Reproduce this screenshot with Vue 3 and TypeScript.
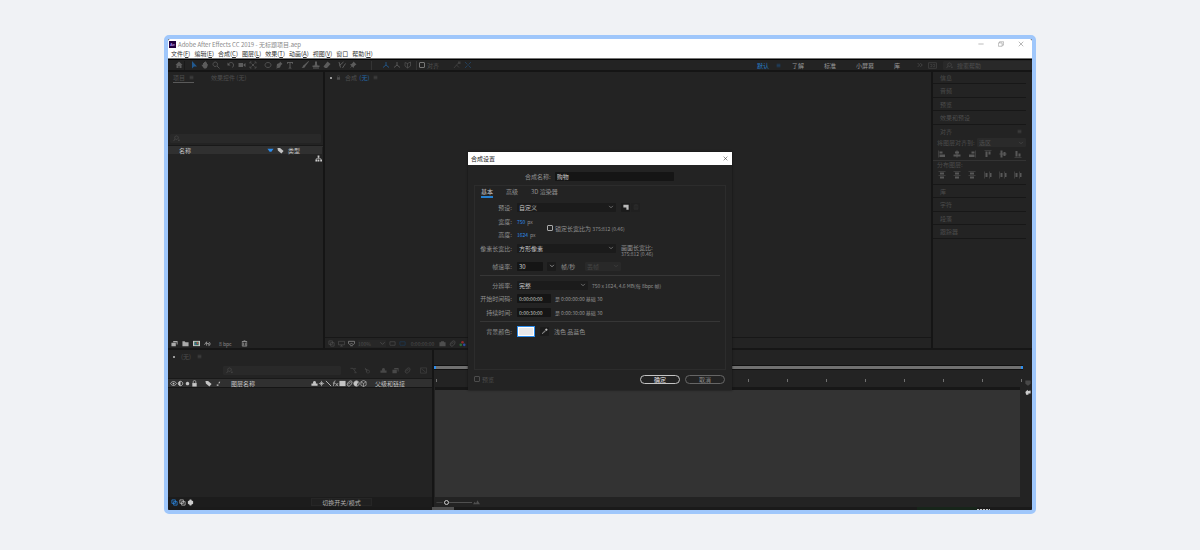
<script setup lang="ts">
import { h, ref } from 'vue'

type Shape = { f?: string; s?: string; w?: number }

const shapes: Record<string, Shape> = {
  home: { f: 'M8 1 1 8h2v6h4v-4h2v4h4V8h2z' },
  arrow: { f: 'M4 0v15l4-4h6z' },
  hand: { f: 'M4 8V4h2V2h2v-1h2v2h2v3l2 1-2 6-2 2H6L1 8l1-1z' },
  zoom: { s: 'M6.5 2a4.500 4.500 0 1 0 .01 0zM10 10l5 5', w: 1.6 },
  search: { s: 'M8 2a4 4 0 1 0 .01 0zM5 9l-4 5', w: 1.6, f: 'M11 11h5l-2.500 3z' },
  rotate: { s: 'M3 7C5 1 13 2 13 8c0 3-1 4-3 5', w: 1.7, f: 'M1 3v6h6z' },
  camera: { f: 'M1 4h9v8H1zM11 7l4-3v8l-4-3z' },
  anchor: { s: 'M2 5V2h3M11 2h3v3M14 11v3h-3M5 14H2v-3M5 5l6 6M11 5l-6 6', w: 1.5 },
  ellipse: { s: 'M8 3c8 0 8 10 0 10S0 3 8 3z', w: 1.5 },
  pen: { f: 'M10 1l5 5-3 2-2 5-8 2 5-6-4 4 1-7 5-2z' },
  type: { f: 'M2 2h12v4h-1l-1-2H9v9l2 1v1H5v-1l2-1V4H4L3 6H2z' },
  brush: { f: 'M15 0l1 1-7 9-3-2zM6 8l3 2c-1 4-5 4-8 4 3-1 2-5 5-6z' },
  stamp: { f: 'M6 1h4v5l1 3h4v3H1V9h4l1-3zM2 13h12v2H2z' },
  eraser: { f: 'M9 1l6 5-7 8H4L1 11z' },
  roto: { s: 'M2 2l3 11M3 9l8-7M9 14l6-9', w: 2 },
  pin: { f: 'M9 1l6 6-2 1-3 3-1 3-3-3-5 4 4-5-3-3 3-1 3-3z' },
  axis: { s: 'M8 2v6L2 13M8 8l6 5', w: 1.8 },
  box: { s: 'M2 3l5 2 6-3v8l-6 4-5-4z M7 5v9', w: 1.2 },
  snap: { s: 'M2 14l5-6 5 5M7 8l4-4', w: 1.8, f: 'M10 1h5v5h-5z' },
  cross: { s: 'M2 2l5 5M14 2L9 7M2 14l5-5M14 14L9 9', w: 2 },
  menu: { s: 'M2 4h12M2 8h12M2 12h12', w: 1.8 },
  chevrons: { s: 'M2 3l5 5-5 5M9 3l5 5-5 5', w: 1.5 },
  keyboard: { s: 'M1 3h14v10H1zM4 6h3v4H4M9 6h3v4H9', w: 1.3 },
  chev: { s: 'M3 5l5 5 5-5', w: 1.8 },
  down: { f: 'M1 4h14l-5 7H6z' },
  tag: { f: 'M1 2h6l8 7-5 6-8-7z' },
  flow: { f: 'M6 1h4v5H6zM1 10h4v5H1zM6 10h4v5H6zM12 10h4v5h-4z', s: 'M8 5v3M3 11V8h10v3', w: 1.2 },
  footage: { f: 'M5 2h10v8h-2V5H5zM1 6h10v8H1z' },
  folder: { f: 'M1 3h5l2 2h7v9H1z' },
  speed: { s: 'M1 11L6 4v9M6 8h5v5M11 5c4 0 4 7 0 8', w: 1.7 },
  trash: { f: 'M6 1h4v1h4v2H2V2h4z', s: 'M3 5v9h10V5M6 6v7M10 6v7', w: 1.5 },
  copy: { s: 'M2 2h8v8H2zM6 6h8v8H6z', w: 1.6 },
  screen: { s: 'M1 3h14v8H1zM5 14h6M8 11v3', w: 1.5 },
  mask: { s: 'M1 3h14v5c-3 5-6-1-7 0-2 1-6 4-7-1zM5 13h6', w: 2 },
  lock: { f: 'M3 7h10v8H3z', s: 'M5 8V4c0-4 6-4 6 0v4', w: 1.6 },
  region: { s: 'M2 11V4h12v8H5M2 12h3', w: 1.6 },
  photo: { f: 'M5 3h6l1 2h3v9H1V5h3z' },
  eye: { s: 'M1 8c4-6 10-6 14 0-4 6-10 6-14 0z', w: 1.8, f: 'M8 6a2 2 0 1 0 .01 0z' },
  sound: { f: 'M8 3a5 5 0 0 0 0 10z', s: 'M8 3a5 5 0 1 0 .01 0z', w: 2 },
  dot: { f: 'M8 4a4 4 0 1 0 .01 0z' },
  hash: { f: 'M9 4h3l-2 4H8zM4 10h4v3H4z' },
  shy: { f: 'M8 2c3 0 4 3 3 6h4v5H1V8h4C4 5 5 2 8 2z' },
  sun: { s: 'M8 2v12M2 8h12M5 5l6 6M11 5l-6 6', w: 1.5 },
  globe: { f: 'M6 1h4v2l4 2v6l-4 2v2H6v-2l-4-2V5l4-2z' },
  slash: { s: 'M2 2l12 12', w: 2 },
  fx: { s: 'M8 2C4 1 5 8 3 14M2 7h5M8 7l6 7M14 7l-6 7', w: 1.7 },
  frame: { f: 'M1 2h14v12H1z' },
  blur: { s: 'M4 13C-1 9 10-1 13 3s-5 14-9 10zM5 10l5-5', w: 1.9 },
  half: { s: 'M8 2a6 6 0 1 0 .01 0z', w: 2, f: 'M8 2a6 6 0 0 0 0 12L12 4z' },
  cube: { s: 'M8 1l6 3v8l-6 3-6-3V4zM2 4l6 4 6-4M8 8v7', w: 1.4 },
  graph: { s: 'M1 2h14v12H1zM3 4l10 8', w: 1.3 },
  flowline: { s: 'M1 3h6l6 9M8 4h6M10 13h5', w: 1.7 },
  draft: { s: 'M2 2l4 4v5M9 7a3.500 3.500 0 1 0 .01 0zM2 6h6', w: 1.6 },
  al: { f: 'M1 1h1v14H1zM3 3h6v4H3zM3 9h11v5H3z' },
  ac: { f: 'M7 1h2v14H7zM4 3h8v4H4zM1 9h14v4H1z' },
  ar: { f: 'M14 1h1v14h-1zM7 3h6v4H7zM2 9h11v5H2z' },
  at: { f: 'M1 1h14v1H1zM3 3h4v11H3zM9 3h4v6H9z' },
  am: { f: 'M1 7h14v2H1zM3 1h4v14H3zM9 4h4v8H9z' },
  ab: { f: 'M1 14h14v1H1zM3 2h4v11H3zM9 7h4v6H9z' },
  dv: { f: 'M1 1h14v1H1zM4 3h8v4H4zM1 9h14v1H1zM4 11h8v4H4z' },
  dh: { f: 'M1 1h1v14H1zM3 4h4v8H3zM10 1h1v14h-1zM12 4h3v8h-3z' },
  minimise: { s: 'M1 8h14', w: 1.5 },
  restore: { s: 'M1 5h10v9H1zM4 5V2h11v9h-4', w: 1.4 },
  close: { s: 'M2 2l12 12M14 2L2 14', w: 1.6 },
  save: { f: 'M1 2h14v13H9V9H1z' },
  dropper: { f: 'M10 2l2-1 3 3-1 2-2 2-4-4z', s: 'M9 6l-7 7-1 2 2-1 7-7', w: 1.6 },
  mountains: { f: 'M0 12l4-6 3 4 3-7 6 9z' },
  shield: { f: 'M1 1h14v9l-7 5-7-5z' },
  comet: { f: 'M1 8l6-6 1 3 7-1v8H9v3H3z' },
}

const Icon = (props: { n: string }) => {
  const g = shapes[props.n]
  return h('svg', { class: 'ic', viewBox: '0 0 16 16', 'aria-hidden': 'true' }, [
    g.f ? h('path', { d: g.f, fill: 'currentColor' }) : null,
    g.s ? h('path', { d: g.s, fill: 'none', stroke: 'currentColor', 'stroke-width': g.w }) : null,
  ])
}
Icon.props = ['n']

const menus = [['文件', 'F'], ['编辑', 'E'], ['合成', 'C'], ['图层', 'L'], ['效果', 'T'], ['动画', 'A'], ['视图', 'V'], ['窗口', ''], ['帮助', 'H']]
const tools = [
  ['arrow', 'hand', 'zoom'],
  ['rotate', 'camera', 'anchor'],
  ['ellipse', 'pen', 'type'],
  ['brush', 'stamp', 'eraser'],
  ['roto', 'pin'],
]
const workspaces = ['了解', '标准', '小屏幕', '库']
const upper = ['信息', '音频', '预览', '效果和预设']
const lower = ['库', '字符', '段落', '跟踪器']
const alignIcons = ['al', 'ac', 'ar', 'at', 'am', 'ab']
const spreadIcons = ['dv', 'dv', 'dv', 'dh', 'dh', 'dh']
const switches = ['shy', 'sun', 'slash', 'fx', 'frame', 'blur', 'half', 'cube']

const compName = ref('购物')
const fps = ref('30')
const start = ref('0:00:00:00')
const duration = ref('0:00:30:00')
</script>

<template>
  <main class="page">
    <section class="window">
      <header class="titlebar">
        <span class="logo">Ae</span>
        <h1>Adobe After Effects CC 2019 - 无标题项目.aep</h1>
        <div class="winbtns">
          <button aria-label="最小化"><Icon n="minimise" /></button>
          <button aria-label="还原"><Icon n="restore" /></button>
          <button aria-label="关闭"><Icon n="close" /></button>
        </div>
      </header>
      <nav class="menubar">
        <button v-for="m in menus" :key="m[0]">{{ m[0] }}<template v-if="m[1]">(<u>{{ m[1] }}</u>)</template></button>
      </nav>

      <div class="toolbar">
        <button class="tool home" aria-label="主页"><Icon n="home" /></button>
        <div v-for="(g, i) in tools" :key="i" class="group">
          <button v-for="t in g" :key="t" class="tool" :class="{ active: t === 'arrow' }" :aria-label="t"><Icon :n="t" /></button>
        </div>
        <div class="group axes">
          <button class="tool active" aria-label="本地轴"><Icon n="axis" /></button>
          <button class="tool" aria-label="世界轴"><Icon n="axis" /></button>
          <button class="tool" aria-label="视图轴"><Icon n="box" /></button>
        </div>
        <label class="check snapcheck"><input type="checkbox" />对齐</label>
        <div class="group faint">
          <button class="tool" aria-label="吸附"><Icon n="snap" /></button>
          <button class="tool active" aria-label="扩展"><Icon n="cross" /></button>
        </div>
        <nav class="spaces">
          <button class="current">默认<Icon n="menu" /></button>
          <button v-for="w in workspaces" :key="w">{{ w }}</button>
          <button class="more" aria-label="更多"><Icon n="chevrons" /></button>
        </nav>
        <Icon n="keyboard" class="keys" />
        <label class="find help"><Icon n="search" /><input type="search" placeholder="搜索帮助" aria-label="搜索帮助" /></label>
      </div>

      <div class="upper">
        <section class="project">
          <div class="tabs">
            <button class="on">项目<Icon n="menu" /></button>
            <button>效果控件 (无)</button>
          </div>
          <div class="preview"></div>
          <label class="find"><Icon n="search" /><input type="search" aria-label="搜索项目" /></label>
          <div class="cols">
            <span class="name">名称</span><Icon n="down" class="blue" /><Icon n="tag" /><span class="kind">类型</span>
          </div>
          <div class="list"><Icon n="flow" /></div>
          <footer class="projfoot">
            <Icon n="footage" /><Icon n="folder" />
            <svg class="ic" viewBox="0 0 16 16" aria-hidden="true">
              <rect x="0" y="2" width="16" height="12" fill="#c8c8c8" />
              <rect x="3" y="4" width="10" height="8" fill="#2f6f52" /><circle cx="10" cy="7" r="2" fill="#c44" /><circle cx="6" cy="9" r="2" fill="#46a" />
            </svg>
            <Icon n="speed" /><span>8 bpc</span><Icon n="trash" />
          </footer>
        </section>

        <section class="viewer">
          <div class="tabs">
            <i class="square"></i><Icon n="lock" /><span>合成 <b>(无)</b></span><Icon n="menu" />
          </div>
          <div class="stage"></div>
          <footer class="viewfoot">
            <Icon n="copy" /><Icon n="screen" /><Icon n="mask" class="lit" />
            <button class="scale">100%<Icon n="chev" /></button>
            <Icon n="region" /><Icon n="region" class="deep" />
            <span class="time">0:00:00:00</span>
            <Icon n="photo" /><Icon n="blur" />
            <svg class="ic" viewBox="0 0 16 16" aria-hidden="true">
              <circle cx="8" cy="5" r="3" fill="#8d2b2b" /><circle cx="4" cy="11" r="3" fill="#2b6e36" /><circle cx="12" cy="11" r="3" fill="#2c4ea0" />
            </svg>
          </footer>
        </section>

        <aside class="side">
          <button v-for="u in upper" :key="u" class="item">{{ u }}</button>
          <section class="align">
            <h2>对齐<Icon n="menu" /></h2>
            <div class="alignto">
              <label for="align-to">将图层对齐到:</label>
              <span class="sel"><select id="align-to"><option>选区</option></select><Icon n="chev" /></span>
            </div>
            <div class="six"><button v-for="a in alignIcons" :key="a" :aria-label="a"><Icon :n="a" /></button></div>
            <h3>分布图层:</h3>
            <div class="six"><button v-for="(a, i) in spreadIcons" :key="i" :aria-label="a + i"><Icon :n="a" /></button></div>
          </section>
          <button v-for="l in lower" :key="l" class="item">{{ l }}</button>
        </aside>
      </div>

      <div class="timeline">
        <section class="layers">
          <div class="tabs"><i class="square"></i><span>(无)</span><Icon n="menu" /></div>
          <div class="layertools">
            <label class="find"><Icon n="search" /><input type="search" aria-label="搜索图层" /></label>
            <Icon n="flowline" /><Icon n="draft" /><Icon n="shy" /><Icon n="footage" /><Icon n="blur" /><Icon n="graph" />
          </div>
          <div class="cols">
            <div class="av"><Icon n="eye" /><Icon n="sound" /><Icon n="dot" /><Icon n="lock" /></div>
            <Icon n="tag" /><Icon n="hash" />
            <span class="layername">图层名称</span>
            <div class="switches"><Icon v-for="s in switches" :key="s" :n="s" /></div>
            <span class="parent">父级和链接</span>
          </div>
          <div class="spacer"></div>
          <footer class="layerfoot">
            <Icon n="copy" class="blue" /><Icon n="copy" /><Icon n="globe" />
            <button>切换开关/模式</button>
          </footer>
        </section>
        <section class="graph">
          <div class="workbar"></div>
          <div class="ruler"><i v-for="n in 16" :key="n"></i></div>
          <div class="tracks"></div>
          <footer class="zoomrow">
            <Icon n="minimise" /><input type="range" min="0" max="100" value="0" aria-label="时间缩放" /><Icon n="mountains" />
          </footer>
        </section>
        <div class="gutter"><Icon n="shield" /><Icon n="comet" /></div>
      </div>
      <div class="strip"><i class="thumb"></i><i class="green"></i><i class="clock"></i></div>

      <form class="dialog" role="dialog" aria-label="合成设置" @submit.prevent>
        <header><h2>合成设置</h2><button type="button" aria-label="关闭对话框"><Icon n="close" /></button></header>
        <div class="namerow"><label for="comp-name">合成名称:</label><input id="comp-name" v-model="compName" /></div>
        <div class="panel">
          <div class="dtabs"><button type="button" class="on">基本</button><button type="button">高级</button><button type="button">3D 渲染器</button></div>
          <div class="row">
            <label for="preset">预设:</label>
            <span class="sel wide"><select id="preset"><option>自定义</option></select><Icon n="chev" /></span>
            <button type="button" class="mini" aria-label="保存预设"><Icon n="save" /></button>
            <button type="button" class="mini off" aria-label="删除预设"><Icon n="trash" /></button>
          </div>
          <div class="dims">
            <div>
              <div class="row"><span class="lab">宽度:</span><a href="#">750</a><small>px</small></div>
              <div class="row"><span class="lab">高度:</span><a href="#">1624</a><small>px</small></div>
            </div>
            <label class="check"><input type="checkbox" />锁定长宽比为 <small>375:812 (0.46)</small></label>
          </div>
          <div class="row aspect">
            <label for="par">像素长宽比:</label>
            <span class="sel wide"><select id="par"><option>方形像素</option></select><Icon n="chev" /></span>
            <p>画面长宽比:<small>375:812 (0.46)</small></p>
          </div>
          <div class="row rate">
            <label for="fps">帧速率:</label><input id="fps" v-model="fps" />
            <button type="button" class="mini" aria-label="选择帧速率"><Icon n="chev" /></button>
            <span class="unit">帧/秒</span>
            <span class="sel drop"><select disabled aria-label="丢帧"><option>丢帧</option></select><Icon n="chev" /></span>
          </div>
          <hr />
          <div class="row">
            <label for="res">分辨率:</label>
            <span class="sel mid"><select id="res"><option>完整</option></select><Icon n="chev" /></span>
            <small>750 x 1624, 4.6 MB(每 8bpc 帧)</small>
          </div>
          <div class="row timerow"><label for="start">开始时间码:</label><input id="start" v-model="start" /><small>是 0:00:00:00  基础 30</small></div>
          <div class="row timerow"><label for="dur">持续时间:</label><input id="dur" v-model="duration" /><small>是 0:00:30:00  基础 30</small></div>
          <hr />
          <div class="row bg">
            <span class="lab">背景颜色:</span>
            <button type="button" class="swatch" aria-label="背景颜色"></button>
            <button type="button" class="mini" aria-label="吸管"><Icon n="dropper" /></button>
            <span>浅色 品蓝色</span>
          </div>
        </div>
        <footer>
          <label class="check dim"><input type="checkbox" />预览</label>
          <button type="submit" class="pill ok">确定</button>
          <button type="button" class="pill">取消</button>
        </footer>
      </form>
    </section>
  </main>
</template>

<style>
body { margin: 0; background: #f0f2f5; }
</style>

<style scoped>
* { box-sizing: border-box; }
.page {
  display: flex;
  min-height: 100vh;
  padding: 35px 164px 36px;
  background: #f0f2f5;
  font: 6px/7px "Noto Sans CJK SC", sans-serif;
  color: #565656;
}
.window {
  position: relative;
  flex: 1;
  min-width: 0;
  display: flex;
  flex-direction: column;
  border: 4px solid #9fc7fb;
  border-radius: 5px;
  background: #232323;
}
button, input, select { font: inherit; color: inherit; background: none; border: 0; padding: 0; margin: 0; min-width: 0; }
button { display: flex; align-items: center; justify-content: center; white-space: nowrap; }
input, select { outline: 0; appearance: none; }
input[type="search"]::-webkit-search-cancel-button { display: none; }
h1, h2, h3, p { font: inherit; margin: 0; }
small { font-size: 5px; white-space: pre; }
a { color: #2d8ceb; text-decoration: none; }
.ic { width: 7px; height: 7px; flex: none; display: block; }
.blue { color: #2d8ceb; }
.spacer { flex: 1; }
.square { width: 2px; height: 2px; background: #999; }

.titlebar { display: flex; align-items: center; height: 10px; background: #fff; color: #888; border-radius: 2px 2px 0 0; padding-left: 1px; }
.titlebar h1 { flex: 1; white-space: nowrap; }
.logo { width: 7px; height: 7px; margin-right: 2px; background: #22003f; color: #a88be0; font: bold 4px/7px "Liberation Sans", sans-serif; text-align: center; }
.winbtns { display: flex; gap: 14px; padding-right: 8px; }
.winbtns .ic { width: 6px; height: 6px; }
.menubar { display: flex; gap: 4px; height: 10px; padding: 0 3px 1px; background: #fff; border-bottom: 1px solid #777; color: #333; }
.menubar button { display: block; }

.toolbar { display: flex; align-items: center; height: 13px; border-top: 1px solid #000; border-bottom: 2px solid #151515; color: #5c5c5c; }
.tool { width: 11px; height: 9px; }
.tool .ic { width: 8px; height: 8px; }
.home { width: 17px; padding-left: 5px; margin-right: 3px; border-right: 1px solid #1a1a1a; }
.group { display: flex; margin-right: 4px; }
.tool.active { color: #22598f; }
.axes { margin-left: 9px; padding-left: 8px; padding-right: 3px; border-left: 1px solid #343434; border-right: 1px solid #343434; margin-right: 2px; }
.check { display: flex; align-items: center; white-space: pre; }
.check input { width: 6px; height: 6px; margin-right: 2px; border: 1px solid currentColor; border-radius: 1px; }
.snapcheck { margin-right: 12px; color: #505050; }
.snapcheck input { border-color: #777; }
.faint { opacity: 0.5; }
.spaces { display: flex; gap: 20px; margin-left: auto; color: #999; }
.spaces .current { color: #2680d0; margin-right: -9px; gap: 7px; }
.current .ic { width: 5px; height: 5px; color: #1d4f80; }
.more { color: #5c5c5c; margin-left: -3px; margin-right: 5px; }
.more .ic { width: 6px; height: 6px; }
.keys { width: 9px; height: 9px; margin-right: 6px; color: #454545; }
.find { display: flex; align-items: center; height: 9px; padding-left: 3px; gap: 4px; background: #292929; border-radius: 1px; color: #4e4e4e; }
.find input { flex: 1; width: 0; height: 8px; }
.find input::placeholder { color: #4e4e4e; opacity: 1; }
.help { width: 89px; }

.upper { display: flex; flex: 277 1 277px; border-bottom: 2px solid #161616; }
.tabs { display: flex; align-items: center; height: 11px; color: #4e4e4e; }
.tabs .ic { width: 5px; height: 5px; }
.project { width: 157px; display: flex; flex-direction: column; border-right: 2px solid #151515; }
.project .tabs { padding-left: 5px; gap: 17px; }
.project .tabs button { height: 11px; gap: 4px; }
.project .tabs .on { border-bottom: 1px solid #5a5a5a; }
.preview { height: 51px; }
.project .find { margin: 0 2px; }
.cols { display: flex; align-items: center; height: 9px; margin-top: 2px; background: #303030; border-top: 1px solid #191919; color: #c4c4c4; }
.project .cols { padding-left: 11px; }
.name { flex: 1; }
.project .cols .ic { margin-right: 3px; }
.kind { width: 35px; border-right: 1px solid #222; margin-left: 1px; }
.list { flex: 1; display: flex; justify-content: flex-end; padding: 1px; color: #ccc; }
.projfoot { display: flex; align-items: center; height: 9px; gap: 4px; padding-left: 3px; color: #aaa; }
.projfoot span { font-size: 5px; margin: 0 5px 0 4px; color: #888; }

.viewer { flex: 1; min-width: 0; display: flex; flex-direction: column; border-right: 2px solid #151515; }
.viewer .tabs { gap: 4px; padding-left: 5px; }
.viewer .tabs b { color: #2368a8; font-weight: 400; margin-left: 1px; }
.stage { flex: 1; }
.viewfoot { display: flex; align-items: center; height: 11px; gap: 3px; padding-left: 3px; border-top: 1px solid #171717; color: #4e4e4e; }
.lit { color: #808080; }
.deep { color: #1c3a58; }
.scale { width: 28px; font-size: 5px; justify-content: space-between; background: #272727; }
.time { font-size: 5px; width: 27px; text-align: center; }

.side { width: 99px; padding-right: 6px; display: flex; flex-direction: column; color: #4c4c4c; }
.item { height: 13px; padding-left: 7px; justify-content: flex-start; border-bottom: 1px solid #171717; flex: none; }
.item:nth-of-type(even) { height: 14px; }
.item:first-child { height: 12px; }
.align { height: 60px; border-bottom: 1px solid #171717; flex: none; }
.align h2 { display: flex; justify-content: space-between; align-items: center; height: 13px; padding: 0 4px 0 7px; }
.align h2 .ic { width: 5px; height: 5px; }
.alignto { display: flex; align-items: center; justify-content: space-between; height: 9px; padding-left: 4px; white-space: nowrap; }
.sel { position: relative; display: flex; align-items: center; height: 9px; background: #1b1b1b; border-radius: 1px; }
.sel select { width: 100%; height: 9px; padding-left: 2px; opacity: 1; }
.sel .ic { position: absolute; right: 2px; width: 6px; height: 6px; pointer-events: none; }
.alignto .sel { width: 49px; background: #2a2a2a; }
.six { display: grid; grid-template-columns: repeat(6, 1fr); height: 13px; padding-left: 1px; align-items: center; color: #585858; }
.six .ic { width: 8px; height: 8px; }
.align h3 { height: 8px; line-height: 7px; padding-left: 4px; border-top: 1px solid #333; }

.timeline { display: flex; flex: 156 1 156px; }
.layers { width: 264px; display: flex; flex-direction: column; }
.layers .tabs { height: 13px; gap: 6px; padding-left: 5px; }
.layertools { display: flex; align-items: center; height: 14px; padding-left: 55px; gap: 5px; color: #484848; }
.layertools .find { width: 118px; margin-right: 4px; }
.layertools .ic:nth-of-type(2) { margin-right: 4px; }
.layertools .ic:nth-of-type(1) { margin-right: 2px; }
.layertools .find .ic { margin-right: 0; }
.layertools .ic:last-child { margin-left: 4px; }
.layers .cols { margin-top: 1px; border-bottom: 1px solid #151515; padding-left: 2px; height: 10px; }
.av { display: flex; width: 35px; }
.layers .cols > .ic { margin-right: 3px; }
.layername { flex: 1; margin-left: 4px; padding-left: 2px; }
.switches { display: flex; margin-right: 8px; }
.parent { width: 57px; }
.layerfoot { display: flex; align-items: center; height: 10px; gap: 1px; padding-left: 3px; background: #1c1c1c; color: #ccc; }
.layerfoot button { margin-left: auto; margin-right: 60px; width: 61px; height: 8px; background: #202020; border: 1px solid #262626; color: #b0b0b0; }
.graph { flex: 1; min-width: 0; display: flex; flex-direction: column; border-left: 2px solid #151515; }
.workbar { height: 5px; margin-top: 15px; background: #707070; border: solid #111; border-width: 1px 0; box-shadow: inset 2px 0 #2d8ceb, inset -2px 0 #2d8ceb; }
.ruler { display: flex; justify-content: space-between; align-items: center; height: 17px; padding: 3px 1px 0 2px; }
.ruler i { width: 1px; height: 3px; background: #707070; }
.tracks { flex: 1; margin: 0 3px 0 1px; border-top: 3px solid #171717; background: #333; }
.zoomrow { display: flex; align-items: center; height: 10px; gap: 1px; padding-left: 2px; color: #505050; }
.zoomrow input { width: 28px; height: 6px; background: linear-gradient(#505050, #505050) center / 100% 1px no-repeat; }
.zoomrow input::-webkit-slider-thumb { appearance: none; width: 5px; height: 5px; border: 1px solid #ccc; border-radius: 50%; background: #232323; }
.gutter { width: 9px; padding-top: 30px; display: flex; flex-direction: column; gap: 3px; align-items: center; color: #ccc; }
.gutter .ic { width: 6px; height: 6px; }
.gutter .ic:first-child { color: #484848; }
.strip { display: flex; height: 3px; background: #1a1a1a; border-radius: 0 0 2px 2px; }
.thumb { margin-left: 264px; width: 22px; background: #505050; }
.green { margin-left: auto; width: 60px; background: #17251a; }
.clock { width: 13px; height: 1px; margin: 2px 42px 0 0; background: repeating-linear-gradient(90deg, #ccc 0 2px, #333 2px 3px); }

.dialog {
  position: absolute;
  top: 113px;
  left: 0;
  right: 0;
  width: 264px;
  margin: 0 auto;
  padding-bottom: 6px;
  background: #232323;
  box-shadow: 0 0 2px #111;
  color: #909090;
}
.dialog header { display: flex; align-items: center; justify-content: space-between; height: 13px; padding: 0 4px 0 3px; background: #fff; color: #222; }
.dialog header .ic { width: 5px; height: 5px; }
.namerow { display: flex; align-items: center; height: 9px; margin: 7px 58px 4px 57px; }
.namerow label { margin-right: 4px; white-space: nowrap; }
.dialog input:not([type]) { height: 9px; background: #151515; color: #c8c8c8; padding-left: 2px; border-radius: 1px; }
.namerow input { flex: 1; }
.panel { height: 185px; margin: 0 6px; border: 1px solid #2c2c2c; }
.dtabs { display: flex; gap: 13px; height: 12px; padding-left: 6px; margin-bottom: 2px; }
.dtabs .on { color: #ccc; border-bottom: 2px solid #2680d0; }
.dtabs button:not(.on) { border-bottom: 2px solid transparent; }
.row { display: flex; align-items: center; height: 14px; white-space: nowrap; }
.row label, .lab { width: 37px; margin-right: 5px; text-align: right; flex: none; }
.row a { font-size: 5px; }
.row a + small { margin-left: 2px; }
.sel select { color: #c4c4c4; }
.sel.wide { width: 99px; margin-right: 5px; }
.mini { width: 9px; height: 9px; background: #1b1b1b; border-radius: 1px; color: #bbb; }
.mini .ic { width: 6px; height: 6px; }
.mini + .mini { margin-left: 1px; }
.mini.off { color: #333; background: #202020; }
.dims { display: flex; align-items: center; padding-top: 1px; }
.dims .row { height: 13px; }
.dims > div { width: 72px; }
.check.dim { color: #4c4c4c; margin-right: auto; }
.dims .check input { border-color: #aaa; }
.aspect p { line-height: 6px; padding-top: 5px; }
.aspect p small { display: block; }
.rate { margin-top: 4px; }
.rate input { width: 26px; }
.rate .mini { margin: 0 5px 0 4px; }
.unit { width: 24px; }
.sel.drop { width: 36px; background: #292929; }
.drop select, .drop { color: #444; }
.alignto select { color: #4e4e4e; }
hr { height: 1px; margin: 2px 5px; border: 0; background: #363636; }
.sel.mid { width: 71px; margin-right: 4px; }
.timerow { height: 13px; }
.timerow + .timerow { height: 14px; }
.timerow input { width: 34px; margin-right: 4px; font-size: 5px; }
.bg { margin-top: 2px; }
.swatch { width: 18px; height: 11px; background: #e8e8ea; border: 1px solid #2d8ceb; outline: 1px solid #fff; outline-offset: -2px; }
.bg .mini { margin: 0 5px; }
.dialog footer { display: flex; align-items: center; margin: 4px 7px 0 6px; gap: 5px; height: 10px; }
.pill { width: 40px; height: 9px; border: 1px solid #666; border-radius: 5px; color: #8a8a8a; }
.pill.ok { border-color: #c4c4c4; color: #e2e2e2; }
</style>
